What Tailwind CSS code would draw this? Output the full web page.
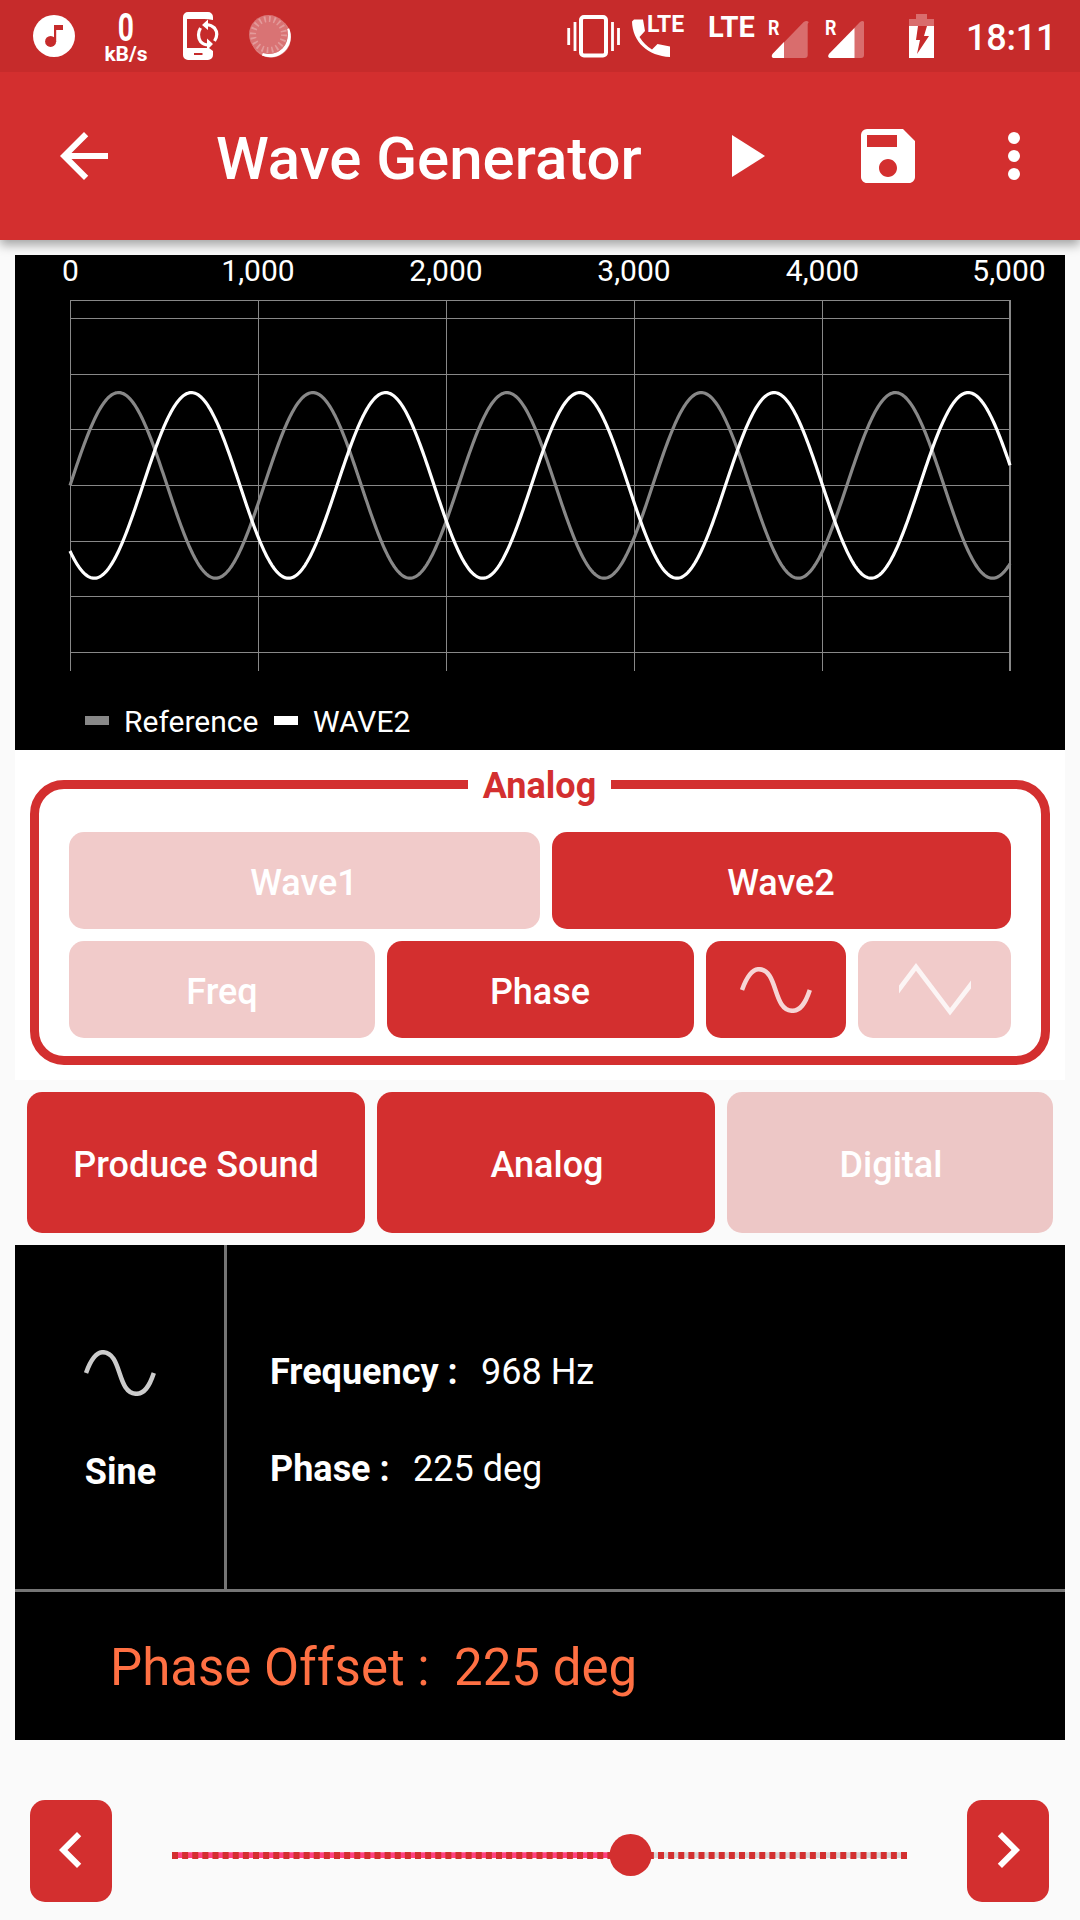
<!DOCTYPE html>
<html lang="en">
<head>
<meta charset="utf-8">
<title>Wave Generator</title>
<script src="https://cdn.jsdelivr.net/npm/@tailwindcss/browser@4"></script>
</head>
<body class="w-[1080px] h-[1920px] overflow-hidden bg-[#fafafa] font-[Roboto,sans-serif] text-white flex flex-col">

<!-- Status bar -->
<header class="relative z-10 h-[72px] shrink-0 bg-[#c62b2b] flex items-start">
  <svg class="w-[42px] h-[72px] ml-[33px]" viewBox="33 0 42 72"><circle cx="54" cy="36" r="21" fill="#fff"/><circle cx="50.6" cy="41.4" r="5.5" fill="#c62b2b"/><path d="M54 25h9v5h-6.8v12H54z" fill="#c62b2b"/></svg>
  <div class="ml-[29px] w-[44px] pt-[10px] flex flex-col items-center font-bold">
    <span class="text-[38px] leading-[36px] scale-x-[.74]">0</span>
    <span class="text-[21px] leading-[16px]">kB/s</span>
  </div>
  <svg class="w-[37px] h-[72px] ml-[35px]" viewBox="183 0 37 72" fill="none"><path d="M188 12h20a5 5 0 0 1 5 5v3q-5-1-9-1H187v29h22l4 3v4a5 5 0 0 1-5 5h-20a5 5 0 0 1-5-5V17a5 5 0 0 1 5-5z" fill="#fff"/><path d="M194 54h8.500" stroke="#c62b2b" stroke-width="2"/><path d="M200.500 28q-4 7 0 13.500 3 3.500 8 3.500M214.500 41q4.500-7 0-13-3-3-8-3.500" stroke="#fff" stroke-width="3.200"/><path d="M202 25l6-5.500V30zM213 44l-6-5.500V50z" fill="#fff"/></svg>
  <svg class="w-[44px] h-[72px] ml-[28px]" viewBox="248 0 44 72" fill="none"><circle cx="271" cy="37.500" r="20" fill="#fff" opacity=".4"/><path d="M287.500 29a19 19 0 0 1-25 25" stroke="#fff" stroke-width="3.500"/><circle cx="268.500" cy="34.500" r="19.500" fill="#d97374"/><circle cx="268.500" cy="34.500" r="15.500" stroke="#e39a9a" stroke-width="6" stroke-dasharray="1.700 3.170"/></svg>
  <svg class="w-[53px] h-[72px] ml-[275px]" viewBox="567 0 53 72" fill="none" stroke="#fff"><rect x="581" y="17" width="25" height="38.500" rx="3" stroke-width="4"/><path d="M575 22v29M612.500 22v29M568.700 28v17M618.500 28v17" stroke-width="2.800"/></svg>
  <div class="relative ml-[12px] w-[54px] h-[72px]">
    <svg class="w-[54px] h-[72px]" viewBox="632 0 54 72"><path d="M634 19.500h9l2 11.500-5.500 6q5 8 12.500 12.500l5.500-5.500 12.500 2.500v10.500C648 56 632.500 42 632 21.500z" fill="#fff"/></svg>
    <span class="absolute left-[15px] top-[13px] text-[23px] leading-[24px] font-bold">LTE</span>
  </div>
  <span class="ml-[22px] w-[51px] pt-[11px] text-[29px] leading-[32px] font-bold">LTE</span>
  <div class="relative ml-[9px] w-[41px] h-[72px]">
    <svg class="w-[41px] h-[72px]" viewBox="768 0 41 72"><path d="M807.700 24v31a3 3 0 0 1-3 3h-31q-3-1-1-4l31-32q3-2 5 0z" fill="#d96d6d"/><path d="M784 42v16h-10.500q-3-1-1-4z" fill="#fff"/></svg>
    <span class="absolute left-0 top-[16px] text-[21px] leading-[24px] font-bold scale-x-[.85] origin-left">R</span>
  </div>
  <div class="relative ml-[16px] w-[41px] h-[72px]">
    <svg class="w-[41px] h-[72px]" viewBox="825 0 41 72"><path d="M864 24v31a3 3 0 0 1-3 3h-31q-3-1-1-4l31-32q3-2 4 0z" fill="#d96d6d"/><path d="M854.500 28v30H830q-3-1-1-4z" fill="#fff"/></svg>
    <span class="absolute left-0 top-[16px] text-[21px] leading-[24px] font-bold scale-x-[.85] origin-left">R</span>
  </div>
  <svg class="w-[26px] h-[72px] ml-[43px]" viewBox="909 0 26 72"><path d="M916 14h11v5h7v7h-25v-7h7z" fill="#d96d6d"/><path d="M909 26h25v32h-25z" fill="#fff"/><path d="M918 26h9l-3 10h5l-12 18 3-14h-4z" fill="#c62b2b"/></svg>
  <span class="ml-[31px] w-[88px] pt-[17px] text-[36px] leading-[42px] font-medium tracking-[-.2px]">18:11</span>
</header>

<!-- App bar -->
<nav class="relative h-[168px] shrink-0 bg-[#d32f2f] shadow-[0_5px_10px_rgba(0,0,0,.35)] flex items-center pl-[48px]">
  <svg class="size-[72px]" viewBox="0 0 24 24" fill="#fff"><path d="M20 11H7.830l5.590-5.590L12 4l-8 8 8 8 1.410-1.410L7.830 13H20v-2z"/></svg>
  <h1 class="ml-24 w-[492px] pt-[6px] text-[60px] leading-[70px] font-medium whitespace-nowrap">Wave Generator</h1>
  <svg class="size-[72px]" viewBox="0 0 24 24" fill="#fff"><path d="M8 5v14l11-7z"/></svg>
  <svg class="size-[72px] ml-[72px]" viewBox="0 0 24 24" fill="#fff"><path d="M17 3H5a2 2 0 0 0-2 2v14c0 1.100.900 2 2 2h14c1.100 0 2-.900 2-2V7l-4-4zm-5 16c-1.660 0-3-1.340-3-3s1.340-3 3-3 3 1.340 3 3-1.340 3-3 3zm3-10H5V5h10v4z"/></svg>
  <svg class="size-[72px] ml-[54px]" viewBox="0 0 24 24" fill="#fff"><circle cx="12" cy="6" r="2"/><circle cx="12" cy="12" r="2"/><circle cx="12" cy="18" r="2"/></svg>
</nav>

<main class="relative mt-[15px] mx-[15px] flex flex-col">
  <!-- Waveform chart -->
  <section class="h-[495px] bg-black flex flex-col">
    <svg class="w-[1050px] h-[420px] overflow-visible" viewBox="15 255 1050 420" fill="none">
      <g fill="#fff" font-size="30" text-anchor="middle">
        <text x="70.500" y="281">0</text><text x="258" y="281">1,000</text><text x="446" y="281">2,000</text><text x="634" y="281">3,000</text><text x="822.500" y="281">4,000</text><text x="1009" y="281">5,000</text>
      </g>
      <path stroke="#888" d="M70 300.500H1011M70 318.500H1010M70 374.500H1010M70 429.500H1010M70 485.500H1010M70 541.500H1010M70 596.500H1010M70 652.500H1010M70.500 300V671M258.500 300V671M446.500 300V671M634.500 300V671M822.500 300V671"/>
      <path stroke="#888" stroke-width="2" d="M1010 300V671"/>
      <path id="reference" stroke="#888" stroke-width="3.200"/>
      <path id="wave2" stroke="#fff" stroke-width="3.200"/>
    </svg>
    <div class="flex items-center h-[60px] mt-[16px] pl-[70px] text-[30px] leading-[36px]">
      <i class="w-6 h-[9px] bg-[#888] mb-[1px]"></i><span class="ml-[15px] w-[134px] pt-[2px]">Reference</span>
      <i class="w-6 h-[9px] bg-white ml-4 mb-[1px]"></i><span class="ml-[15px] pt-[2px]">WAVE2</span>
    </div>
  </section>

  <!-- Analog wave controls -->
  <section class="relative h-[330px] bg-white p-[15px] pt-[30px] text-[36px] leading-[42px] font-medium">
    <div class="h-[285px] rounded-[34px] border-[9px] border-[#d32f2f] px-[30px] pt-[43px] flex flex-col gap-3">
      <div class="flex gap-3 h-[97px]">
        <button class="w-[471px] rounded-[15px] bg-[#f1cbca] pt-[5px] pr-[1px]">Wave1</button>
        <button class="w-[459px] rounded-[15px] bg-[#d32f2f] pt-[5px] pr-[1px]">Wave2</button>
      </div>
      <div class="flex gap-3 h-[97px]">
        <button class="w-[306px] rounded-[15px] bg-[#f1cbca] pt-[5px]">Freq</button>
        <button class="w-[307px] rounded-[15px] bg-[#d32f2f] pt-[5px] pr-[1px]">Phase</button>
        <button class="w-[140px] rounded-[15px] bg-[#d32f2f] flex items-center justify-center"><svg class="w-[72px] h-[46px]" viewBox="0 0 72 46" fill="none" stroke="#fff" stroke-opacity=".8" stroke-width="4.500"><path d="M2 23C7 9 12 2.200 18.800 2.200C29 2.200 32.500 14 35.500 23S42 43.800 52.500 43.800C60 43.800 65 37.500 69.800 23"/></svg></button>
        <button class="w-[153px] rounded-[15px] bg-[#f1cbca] flex items-center justify-center"><svg class="w-[72px] h-[53px]" viewBox="0 0 72 53" fill="#fff" fill-opacity=".8"><path d="M0 22.400L17 0l34 45L72 17.400v8L51 52.400 17 7.700 0 30.400z"/></svg></button>
      </div>
    </div>
    <span class="absolute left-[453px] top-[15px] w-[143px] bg-white text-center font-bold text-[#d32f2f]">Analog</span>
  </section>

  <!-- Mode buttons -->
  <section class="flex gap-3 p-3 h-[165px] text-[36px] leading-[42px] font-medium">
    <button class="w-[338px] rounded-[15px] bg-[#d32f2f] pt-[4px]">Produce Sound</button>
    <button class="w-[338px] rounded-[15px] bg-[#d32f2f] pt-[4px] pl-[2px]">Analog</button>
    <button class="w-[326px] rounded-[15px] bg-[#edc7c6] pt-[4px] pl-[2px]">Digital</button>
  </section>

  <!-- Wave properties -->
  <section class="h-[495px] bg-black flex flex-col text-[36px] leading-[42px]">
    <div class="h-[344px] flex">
      <div class="w-[209px] flex flex-col items-center pt-[105px] pl-[1px] font-bold">
        <svg class="w-[72px] h-[46px]" viewBox="0 0 72 46" fill="none" stroke="#ccc" stroke-width="4.500"><path d="M2 23C7 9 12 2.200 18.800 2.200C29 2.200 32.500 14 35.500 23S42 43.800 52.500 43.800C60 43.800 65 37.500 69.800 23"/></svg>
        <span class="mt-[55px] pl-[1px]">Sine</span>
      </div>
      <div class="w-[3px] bg-[#757575]"></div>
      <div class="pl-[43px] pt-[106px] flex flex-col gap-[55px] whitespace-pre">
        <p><b class="inline-block w-[211px]">Frequency :</b>968 Hz</p>
        <p><b class="inline-block w-[143px]">Phase :</b>225 deg</p>
      </div>
    </div>
    <div class="h-[3px] bg-[#757575]"></div>
    <p class="pl-[95px] pt-[46px] text-[51px] leading-[60px] text-[#ff7043] whitespace-nowrap"><span class="inline-block w-[344px]">Phase Offset :</span>225 deg</p>
  </section>
</main>

<!-- Phase slider -->
<footer class="flex items-center mt-[60px] ml-[30px] h-[102px]">
  <button class="w-[82px] h-[102px] rounded-[15px] bg-[#d32f2f] flex items-center justify-center pb-[3px]"><svg class="size-[72px]" viewBox="0 0 24 24" fill="#fff"><path d="M15.410 7.410L14 6l-6 6 6 6 1.410-1.410L10.830 12z"/></svg></button>
  <svg class="w-[735px] h-[102px] mx-[60px]" viewBox="172 1800 735 102">
    <path fill="#ff4081" d="M174 1852.300h456v5.800h-456z"/><path fill="#d8d8d8" d="M630 1852.300h274v5.800H630z"/>
    <path stroke="#d32f2f" stroke-width="7" stroke-dasharray="6 4.125" d="M172 1855.500h735"/>
    <circle cx="630.600" cy="1855" r="21" fill="#d32f2f"/>
  </svg>
  <button class="w-[82px] h-[102px] rounded-[15px] bg-[#d32f2f] flex items-center justify-center pb-[2px]"><svg class="size-[72px]" viewBox="0 0 24 24" fill="#fff"><path d="M10 6L8.590 7.410 13.170 12l-4.580 4.590L10 18l6-6z"/></svg></button>
</footer>

<script>
  // Plot a sine of 968 Hz over a 5000 µs window
  function plot(id, phaseDeg) {
    const points = [];
    for (let x = 0; x <= 940; x++) {
      const t = x / 940 * 0.005;
      const y = 485.4 - 92.8 * Math.sin(2 * Math.PI * 968 * t + phaseDeg * Math.PI / 180);
      points.push((70 + x) + ',' + y.toFixed(2));
    }
    document.getElementById(id).setAttribute('d', 'M' + points.join('L'));
  }
  plot('reference', 0);
  plot('wave2', 225);
</script>
</body>
</html>
